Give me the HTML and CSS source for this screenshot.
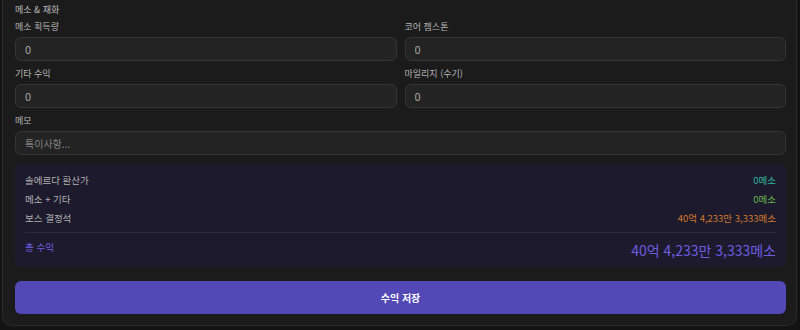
FILE: index.html
```html
<!DOCTYPE html>
<html lang="ko">
<head>
  <meta charset="UTF-8" />
  <meta name="viewport" content="width=device-width, initial-scale=1" />
  <title>수익 기록</title>
  <link rel="stylesheet" href="styles.css">
</head>
<body>
  <div class="card">
    <div class="section-title">메소 &amp; 재화</div>

    <div class="grid">
      <div class="field">
        <label>메소 획득량</label>
        <input class="input" type="text" value="0" />
      </div>
      <div class="field">
        <label>코어 젬스톤</label>
        <input class="input" type="text" value="0" />
      </div>
      <div class="field">
        <label>기타 수익</label>
        <input class="input" type="text" value="0" />
      </div>
      <div class="field">
        <label>마일리지 (수기)</label>
        <input class="input" type="text" value="0" />
      </div>
    </div>

    <div class="field">
      <label>메모</label>
      <input class="input" type="text" placeholder="특이사항..." />
    </div>

    <!-- 요약 -->
    <div class="summary">
      <div class="row">
        <span>솔에르다 환산가</span>
        <span class="teal">0메소</span>
      </div>
      <div class="row">
        <span>메소 + 기타</span>
        <span class="green">0메소</span>
      </div>
      <div class="row">
        <span>보스 결정석</span>
        <span class="orange">40억 4,233만 3,333메소</span>
      </div>
      <div class="total">
        <span class="total-label">총 수익</span>
        <span class="total-value">40억 4,233만 3,333메소</span>
      </div>
    </div>

    <button class="btn">수익 저장</button>
  </div>
</body>
</html>
```

FILE: styles.css
```css
body {
  margin: 0;
  padding: 0 3px 2px 2px;
  background: #131313;
  font-family: 'Noto Sans CJK KR', 'Noto Sans', sans-serif;
  color: #c8c8c8;
}
.card {
  background: #1b1b1b;
  border: 1px solid #2a2a2a;
  border-top: none;
  border-radius: 0 0 10px 10px;
  padding: 3px 10px 11px 12px;
}
.section-title {
  font-size: 9px;
  line-height: 14px;
  color: #bdbdbd;
  margin-bottom: 4px;
}
.grid {
  display: grid;
  grid-template-columns: 1fr 1fr;
  column-gap: 8px;
}
.field {
  display: flex;
  flex-direction: column;
  margin-bottom: 7px;
}
.field label {
  font-size: 9px;
  line-height: 12px;
  color: #b5b5b5;
  margin-bottom: 4px;
}
.input {
  box-sizing: border-box;
  height: 24px;
  padding: 0 9px;
  background: #232323;
  border: 1px solid #353535;
  border-radius: 6px;
  font-family: inherit;
  font-size: 11px;
  color: #a8a8a8;
  outline: none;
}
.input::placeholder {
  color: #858585;
  font-size: 10px;
}
.summary {
  margin-top: 9px;
  background: #1d1a2d;
  border-radius: 6px;
  padding: 7px 10px 7px;
}
.row {
  display: flex;
  justify-content: space-between;
  font-size: 9.5px;
  line-height: 19px;
  color: #b0b0b0;
}
.teal { color: #2fb59a; }
.green { color: #66b04a; }
.orange { color: #d0782c; }
.total {
  display: flex;
  justify-content: space-between;
  align-items: flex-start;
  margin-top: 4px;
  padding-top: 7px;
  border-top: 1px solid #2e2b3d;
}
.total-label {
  font-size: 9.5px;
  line-height: 14px;
  color: #6d5fe0;
}
.total-value {
  font-size: 14px;
  line-height: 20px;
  color: #6b5ee0;
}
.btn {
  display: block;
  width: 100%;
  height: 33px;
  margin-top: 14px;
  background: #5248b6;
  color: #fff;
  border: none;
  border-radius: 6px;
  font-family: inherit;
  font-size: 10px;
  font-weight: bold;
  cursor: pointer;
}
```
